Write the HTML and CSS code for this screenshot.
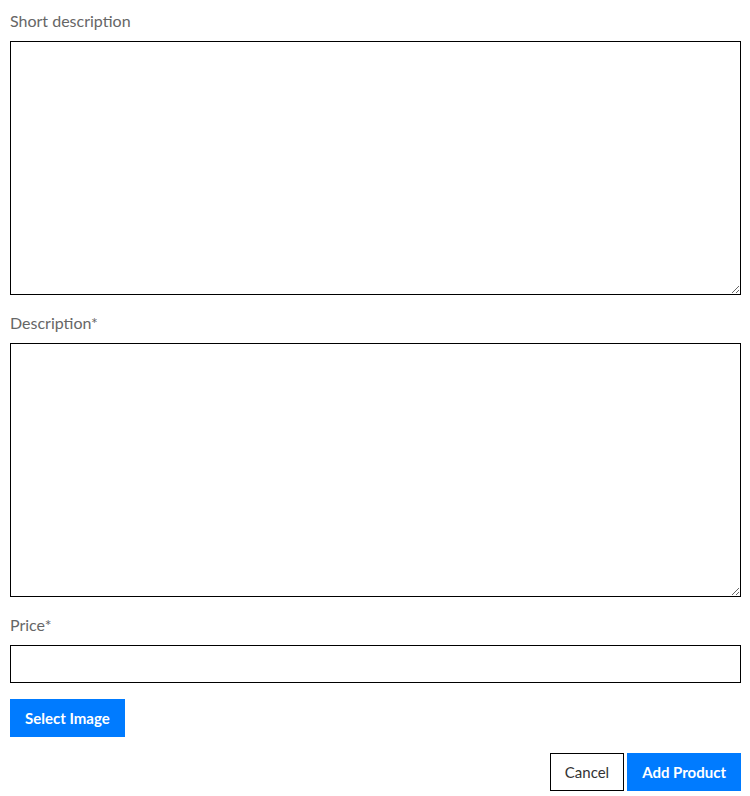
FILE: index.html
```html
<!DOCTYPE html>
<html lang="en">
<head>
  <meta charset="UTF-8" />
  <meta name="viewport" content="width=device-width, initial-scale=1.0" />
  <title>Add Product</title>
  <link rel="stylesheet" href="styles.css">
</head>
<body>

  <form class="product-form" action="#" method="POST">
    <div class="field">
      <label for="short">Short description</label>
      <textarea id="short" name="short"></textarea>
    </div>

    <div class="field">
      <label for="desc">Description*</label>
      <textarea id="desc" name="desc"></textarea>
    </div>

    <div class="field">
      <label for="price">Price*</label>
      <input type="text" id="price" name="price">
    </div>

    <div class="image-row">
      <button class="btn btn-primary" type="button">Select Image</button>
    </div>

    <div class="actions">
      <button class="btn btn-outline" type="button">Cancel</button>
      <button class="btn btn-primary" type="submit">Add Product</button>
    </div>
  </form>

</body>
</html>
```

FILE: styles.css
```css
/* ===== base ===== */
*{box-sizing:border-box;}
html,body{margin:0;}
body{
  background:#fff;color:#333;
  font-family:'Lato','Liberation Sans',sans-serif;font-size:15px;
}

/* ===== form layout ===== */
.product-form{padding:10px 9px 0 10px;}
.field{display:flex;flex-direction:column;margin-bottom:16px;}
.field label{color:#666;font-size:16px;line-height:21px;margin-bottom:10px;}

.field textarea,
.field input{
  display:block;width:100%;margin:0;
  border:1px solid #000;border-radius:0;
  font-family:inherit;font-size:15px;background:#fff;
}
.field textarea{height:254px;margin-bottom:1px;}
.field input{height:38px;padding:0 8px;}

.image-row{margin-bottom:16px;}

/* ===== buttons ===== */
.btn{
  height:38px;padding:0 14px;border:1px solid transparent;border-radius:0;
  font-family:inherit;font-size:15px;cursor:pointer;
}
.btn-primary{background:#007bff;border-color:#007bff;color:#fff;font-weight:bold;}
.btn-outline{background:#fff;border-color:#000;color:#333;}

.actions{display:flex;justify-content:flex-end;gap:3px;}
```
